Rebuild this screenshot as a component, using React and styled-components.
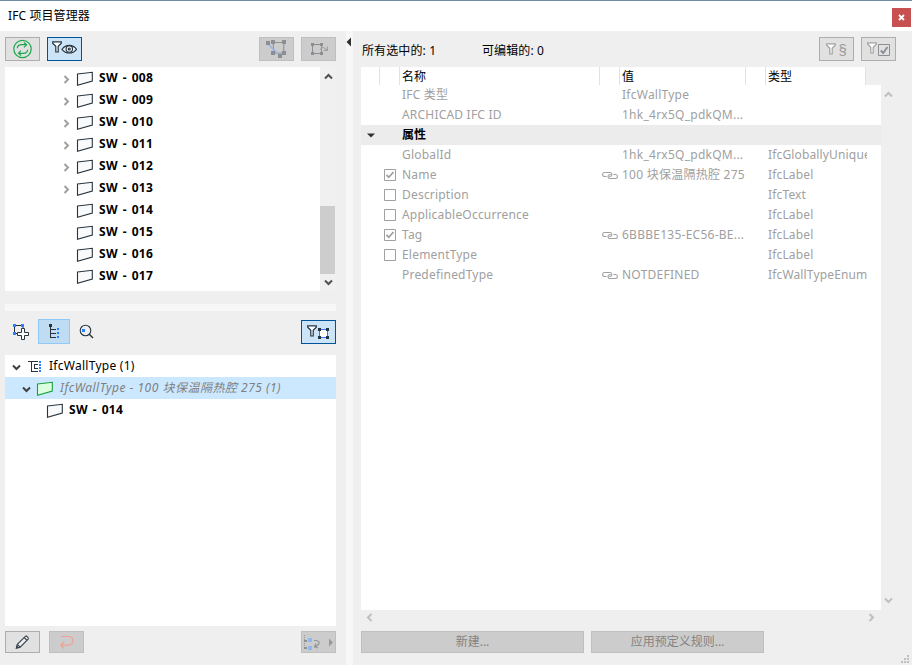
import React from "react";
import styled, { createGlobalStyle } from "styled-components";

const GlobalStyle = createGlobalStyle`
  * {
    box-sizing: border-box;
  }
  body {
    margin: 0;
    background: #efefef;
    color: #000;
    font-family: "Noto Sans", "Noto Sans CJK SC", sans-serif;
    font-size: 12px;
    line-height: 20px;
    overflow: hidden;
  }
  svg {
    display: block;
    flex: none;
  }
`;

const Window = styled.div`
  display: flex;
  flex-direction: column;
  width: 912px;
  height: 665px;
  background: #efefef;
`;

const TitleBar = styled.header`
  display: flex;
  justify-content: space-between;
  height: 31px;
  padding: 7px 1px 0 8px;
  border-top: 1px solid #6f8ca9;
  background: #fff;
`;

const Title = styled.div`
  line-height: 16px;
  letter-spacing: 0.1px;
`;

const CloseButton = styled.button`
  display: flex;
  align-items: center;
  justify-content: center;
  width: 19px;
  height: 19px;
  padding: 0;
  border: 0;
  background: #c75050;
`;

const Main = styled.main`
  display: grid;
  grid-template-columns: 336px 10px 7px 8px 551px;
  height: 634px;
`;

const LeftPane = styled.section`
  display: flex;
  flex-direction: column;
  padding-left: 5px;
`;

const SplitterGutter = styled.div`
  grid-column: 3;
  padding: 6px 0 0 0;
  background: #f7f7f7;
`;

const RightPane = styled.section`
  grid-column: 5;
  display: flex;
  flex-direction: column;
`;

const Toolbar = styled.div`
  display: flex;
  align-items: flex-start;
  height: 36px;
  padding-top: 6px;
  gap: 7px;
`;

const Spacer = styled.div`
  flex: 1;
`;

const skins = {
  normal: { bg: "#e1e1e1", line: "#adadad" },
  active: { bg: "#cce4f7", line: "#005499" },
  disabled: { bg: "#cccccc", line: "#bfbfbf" },
};

const Button = styled.button`
  display: flex;
  align-items: center;
  justify-content: center;
  flex: none;
  width: ${({ $width }) => $width || 35}px;
  height: ${({ $height }) => $height || 24}px;
  padding: 0;
  border: 1px solid ${({ $skin }) => skins[$skin || "normal"].line};
  background: ${({ $skin }) => skins[$skin || "normal"].bg};
  color: #838383;
  font: inherit;
`;

const ListBox = styled.div`
  display: flex;
  height: 224px;
  background: #fff;
`;

const Rows = styled.div`
  flex: 1;
`;

const TreeRow = styled.div`
  display: flex;
  align-items: center;
  height: 22px;
  padding-left: ${({ $indent }) => $indent}px;
  background: ${({ $selected }) => ($selected ? "#cce8ff" : "transparent")};
`;

const ChevronSlot = styled.span`
  width: ${({ $width }) => $width}px;
  padding-top: 2px;
`;

const Label = styled.span`
  margin-left: ${({ $gap }) => $gap || 6}px;
  font-weight: ${({ $bold }) => ($bold ? 700 : 400)};
  font-style: ${({ $italic }) => ($italic ? "italic" : "normal")};
  letter-spacing: ${({ $track }) => $track || 0}px;
  word-spacing: ${({ $bold }) => ($bold ? 1.3 : 0)}px;
  color: ${({ $muted }) => ($muted ? "#808080" : "#000")};
  white-space: pre;
`;

const ScrollBar = styled.div`
  display: flex;
  flex-direction: column;
  align-items: center;
  width: 16px;
  padding: 5px 0 4px;
  background: #f0f0f0;
`;

const Thumb = styled.div`
  width: 15px;
  height: 68px;
  margin: 0 1px 4px 0;
  background: #cdcdcd;
`;

const RowSplitter = styled.div`
  height: 7px;
  margin-top: 13px;
  background: #f7f7f7;
`;

const ViewBar = styled.div`
  display: flex;
  align-items: center;
  height: 44px;
  padding: 0 0 3px 7px;
`;

const ViewToggle = styled.button`
  display: flex;
  align-items: center;
  justify-content: center;
  width: 32px;
  height: 25px;
  margin: 0 9px 0 8px;
  padding: 0;
  border: 1px solid #90c8f6;
  background: #c0dcf3;
`;

const TreeBox = styled.div`
  height: 271px;
  background: #fff;
`;

const Footer = styled.div`
  display: flex;
  gap: ${({ $gap }) => $gap}px;
  padding-top: 5px;
`;

const Summary = styled.div`
  display: flex;
  height: 36px;
  padding: 6px 16px 0 1px;
  gap: 7px;
`;

const Count = styled.span`
  width: ${({ $width }) => $width}px;
  padding-top: 5px;
  line-height: 18px;
  margin-right: -7px;
  letter-spacing: 0.12px;
`;

const TableArea = styled.div`
  display: grid;
  grid-template-columns: 520px 15px;
  grid-template-rows: 18px 525px 16px;
`;

const columns = "19px 20px 200px 20px 126px 20px 100px";

const HeaderRow = styled.div`
  grid-column: 1 / 3;
  display: grid;
  grid-template-columns: ${columns};
  width: 505px;
  height: 18px;
  background: #fff;
`;

const HeaderCell = styled.div`
  height: 18px;
  padding-left: 2px;
  border-right: 1px solid #e2e2e2;
  line-height: 20px;
`;

const TableBody = styled.div`
  background: #fff;
`;

const PropertyRow = styled.div`
  display: grid;
  grid-template-columns: ${columns};
  height: 20px;
  background: ${({ $group }) => ($group ? "#ececec" : "transparent")};
  color: ${({ $group }) => ($group ? "#000" : "#a0a0a0")};
  font-weight: ${({ $group }) => ($group ? 700 : 400)};
`;

const Cell = styled.div`
  margin-right: -1px;
  padding-left: 2px;
  overflow: hidden;
  white-space: pre;
  line-height: 19px;
  letter-spacing: ${({ $track }) => $track || 0}px;
`;

const IconCell = styled.div`
  display: flex;
  align-items: center;
  padding-left: ${({ $left }) => $left || 0}px;
`;

const SideScroll = styled.div`
  display: flex;
  flex-direction: column;
  justify-content: space-between;
  align-items: center;
  padding: 5px 0;
`;

const BottomScroll = styled.div`
  display: flex;
  align-items: center;
  justify-content: space-between;
  padding: 0 5px 1px 4px;
`;

const Grip = styled.svg`
  position: absolute;
  right: 3px;
  bottom: 2px;
`;

const paths = {
  up: "M1 6.5 4.5 3 8 6.5",
  down: "M1 2.5 4.5 6 8 2.5",
  left: "M6.5 1 3 4.5 6.5 8",
  right: "M2.5 1 6 4.5 2.5 8",
};

const Chevron = ({ dir, color = "#a0a0a0" }) => (
  <svg width="9" height="9" viewBox="0 0 9 9" fill="none" stroke={color} strokeWidth="2">
    <path d={paths[dir]} />
  </svg>
);

const Slab = ({ green }) => (
  <svg width="17" height="17" viewBox="0 0 17 17">
    <path
      d="M1.5 4 16.3 2.3V11L1.5 15.3Z"
      fill={green ? "#dcffe0" : "#f9fafc"}
      stroke={green ? "#18a03c" : "#27343e"}
      strokeWidth="1.1"
    />
  </svg>
);

const Funnel = ({ color = "#27343e" }) => (
  <path d="M.7.8H9.3V2.2L6.2 5.2V11H3.8V5.2L.7 2.2Z" fill="#fff" stroke={color} strokeWidth="1.2" />
);

const RefreshIcon = () => (
  <svg width="19" height="20" viewBox="0.5 0 19 20" fill="none" stroke="#1da84e" strokeWidth="1.2">
    <circle cx="10" cy="10" r="8.7" />
    <path d="M4.8 9.3C5 7 7 5.7 9 5.7h4.8M11.5 3.5 14 5.8 11.6 8.3" />
    <path d="M15.2 10.7C15 13 13 14.3 11 14.3H6.2M8.5 16.5 6 14.2 8.4 11.7" />
  </svg>
);

const FilterEyeIcon = () => (
  <svg width="25" height="16" viewBox="0 0 25 16">
    <Funnel />
    <g fill="none" stroke="#27343e" strokeWidth="1.1">
      <path d="M10 8.3C14 3 20.5 3 24.6 8.3 20.5 13.3 14 13.3 10 8.3Z" fill="#e9f3fc" />
      <circle cx="17.3" cy="8" r="3.2" />
      <circle cx="17.3" cy="8" r="1" />
    </g>
  </svg>
);

const SelectElementsIcon = () => (
  <svg width="21" height="18" viewBox="0 0 21 18">
    <g fill="none" stroke="#939393" strokeWidth="1.1">
      <path d="M7 2.5H18L17.5 13H8Z" />
      <path d="M2 4 14 16" stroke="#93b5ef" strokeWidth="1.5" />
    </g>
    <g fill="#8b8f93">
      <path d="M0 1h4v4H0zM5 0h4v4H5zM16 0h4v4h-4zM5 11h4v4H5zM16 11h4v4h-4zM12 14h4v4h-4z" />
    </g>
  </svg>
);

const SelectNextIcon = () => (
  <svg width="19" height="16" viewBox="0 0 19 16">
    <path d="M3.5 3.5H12.5V12.5H3.5Z" fill="none" stroke="#8b8f93" />
    <path d="M2 2h3v3H2zM11 2h3v3h-3zM2 11h3v3H2zM11 11h3v3h-3z" fill="#8b8f93" />
    <path d="M11.5 8.5C12.5 6 15 5.5 17.5 9M18.5 5.5V9.5H14.5" fill="none" stroke="#9c9fa1" strokeWidth="1.1" />
  </svg>
);

const FilterRuleIcon = () => (
  <svg width="21" height="12" viewBox="0 0 21 12" overflow="visible">
    <Funnel color="#a0a0a0" />
    <text x="12.5" y="12" fontSize="15" fill="#999" fontFamily="Liberation Sans">
      §
    </text>
  </svg>
);

const FilterCheckIcon = () => (
  <svg width="23" height="14" viewBox="0 0 23 14">
    <Funnel color="#a0a0a0" />
    <path d="M11.5 2.5h11v11h-11z" fill="none" stroke="#8b8f93" />
    <path d="M13.8 8.5 16.2 11 20.5 5" fill="none" stroke="#8b8f93" strokeWidth="2" />
  </svg>
);

const AddSelectionIcon = () => (
  <svg width="18" height="18" viewBox="0 0 18 18">
    <path d="M2.5 2.5H11V10.5H2.5Z" fill="none" stroke="#27343e" />
    <path d="M9.5 5.5h3v4h4v3h-4v4h-3v-4h-4v-3h4Z" fill="#fff" stroke="#27343e" />
    <path d="M1 1h3v3H1zM9 1h3v3H9zM1 9h3v3H1z" fill="#2680ff" />
  </svg>
);

const TreeModeIcon = () => (
  <svg width="12" height="15" viewBox="0 0 12 15" shapeRendering="crispEdges">
    <path d="M2.5 1V13.5H8M2.5 5.5H8M2.5 9.5H8" fill="none" stroke="#27343e" />
    <path d="M1 0h3v3H1z" fill="#27343e" />
    <path d="M9 4h2v2H9zM9 8h2v2H9zM9 12h2v2H9z" fill="#2680ff" />
  </svg>
);

const FindIcon = () => (
  <svg width="15" height="15" viewBox="0 0 15 15">
    <circle cx="6.5" cy="6.5" r="5.3" fill="none" stroke="#27343e" strokeWidth="1.1" />
    <path d="M10 10 14 14" stroke="#27343e" strokeWidth="1.5" />
    <path d="M3 5h3v3H3z" fill="#2680ff" />
  </svg>
);

const FilterSelectionIcon = () => (
  <svg width="23" height="14" viewBox="0 0 23 14">
    <Funnel />
    <path d="M12.5 4.5h8v8h-8z" fill="#fff" stroke="#2680ff" />
    <path d="M11 3h3v3h-3zM19 3h3v3h-3zM11 11h3v3h-3zM19 11h3v3h-3z" fill="#27343e" />
  </svg>
);

const TypeIcon = () => (
  <svg width="14" height="14" viewBox="0 0 14 14" shapeRendering="crispEdges">
    <path d="M0 2.5H10M3.5 2V12.5H10M6.5 9.5V5.5H10M6 9.5H10" fill="none" stroke="#27343e" />
    <path d="M11 2h2v2h-2zM11 5h2v2h-2zM11 8h2v2h-2zM11 11h2v2h-2z" fill="#2680ff" />
  </svg>
);

const PencilIcon = () => (
  <svg width="15" height="16" viewBox="0 0 16 16" fill="none" stroke="#3a4550" strokeWidth="1.2">
    <path d="M1.5 14.5 2.5 10.5 11 2C12 .8 15 3.5 14 5L5.5 13.5Z" fill="#efefef" />
    <path d="M9.8 3.2 12.8 6.2M2.5 10.5 5.5 13.5" />
    <path d="M1.5 14.5 2 12.5 3.5 14Z" fill="#3a4550" />
  </svg>
);

const UndoIcon = () => (
  <svg width="15" height="14" viewBox="0 0 15 14" fill="none" stroke="#f0a090" strokeWidth="1.2">
    <path d="M2 1.5H9.5A4.3 4.3 0 0 1 9.5 10.2H1.8M5.3 6.7 1.6 10.2 5.3 13.6" />
  </svg>
);

const AssignIcon = () => (
  <svg width="31" height="18" viewBox="1 0 31 18">
    <path d="M2.5 2V16" stroke="#999" strokeDasharray="1 1" />
    <path d="M2 7h3v2H2zM2 14h3v2H2z" fill="#909090" />
    <path d="M6 5h4v4H6zM6 13h4v4H6z" fill="#94b6ee" />
    <path d="M12 7.5H14C18.5 8 18 12 13 13.5M14 10.5 12.5 13.8 16 15" fill="none" stroke="#939698" strokeWidth="1.2" />
    <path d="M27 5.5 31 9.5 27 13.5Z" fill="#999" />
  </svg>
);

const LinkIcon = () => (
  <svg width="16" height="10" viewBox="0 0 16 10" fill="none" stroke="#a0a0a0" strokeWidth="1.1">
    <path d="M4.5 6.5H2.2Q.6 6.5.6 4.5T2.2 2.5H8.3Q9.8 2.5 9.8 4.5T8.3 6.3H7" />
    <path d="M11.5 4.5H13.8Q15.4 4.5 15.4 6.5T13.8 8.5H7.8Q6 8.5 6 6.5T7.8 4.5H8.7" />
  </svg>
);

const CheckBox = ({ checked }) => (
  <svg width="12" height="12" viewBox="0 0 12 12" fill="none" stroke="#a0a0a0">
    <path d="M.5.5h11v11H.5z" />
    {checked && <path d="M2.5 6 4.8 8.3 9.5 3" strokeWidth="1.8" />}
  </svg>
);

const walls = [
  { id: "008", open: true },
  { id: "009", open: true },
  { id: "010", open: true },
  { id: "011", open: true },
  { id: "012", open: true },
  { id: "013", open: true },
  { id: "014" },
  { id: "015" },
  { id: "016" },
  { id: "017" },
];

const properties = [
  { name: "IFC 类型", value: "IfcWallType" },
  { name: "ARCHICAD IFC ID", value: "1hk_4rx5Q_pdkQM..." },
  { name: "属性", group: true },
  { name: "GlobalId", value: "1hk_4rx5Q_pdkQM...", type: "IfcGloballyUnique" },
  { name: "Name", value: "100 块保温隔热腔 275", type: "IfcLabel", checked: true, linked: true },
  { name: "Description", type: "IfcText", checked: false },
  { name: "ApplicableOccurrence", type: "IfcLabel", checked: false },
  { name: "Tag", value: "6BBBE135-EC56-BE...", type: "IfcLabel", checked: true, linked: true },
  { name: "ElementType", type: "IfcLabel", checked: false },
  { name: "PredefinedType", value: "NOTDEFINED", type: "IfcWallTypeEnum", linked: true },
];

const ElementPane = () => (
  <LeftPane>
    <Toolbar>
      <Button>
        <RefreshIcon />
      </Button>
      <Button $skin="active">
        <FilterEyeIcon />
      </Button>
      <Spacer />
      <Button $skin="disabled">
        <SelectElementsIcon />
      </Button>
      <Button $skin="disabled">
        <SelectNextIcon />
      </Button>
    </Toolbar>
    <ListBox>
      <Rows>
        {walls.map((wall) => (
          <TreeRow key={wall.id} $indent={57}>
            <ChevronSlot $width={14}>{wall.open && <Chevron dir="right" />}</ChevronSlot>
            <Slab />
            <Label $bold $track={0.35}>
              SW - {wall.id}
            </Label>
          </TreeRow>
        ))}
      </Rows>
      <ScrollBar>
        <Chevron dir="up" color="#505050" />
        <Spacer />
        <Thumb />
        <Chevron dir="down" color="#505050" />
      </ScrollBar>
    </ListBox>
    <RowSplitter />
    <ViewBar>
      <AddSelectionIcon />
      <ViewToggle>
        <TreeModeIcon />
      </ViewToggle>
      <FindIcon />
      <Spacer />
      <Button $skin="active">
        <FilterSelectionIcon />
      </Button>
    </ViewBar>
    <TreeBox>
      <TreeRow $indent={7}>
        <ChevronSlot $width={16}>
          <Chevron dir="down" color="#404040" />
        </ChevronSlot>
        <TypeIcon />
        <Label $gap={7} $track={0.27}>
          IfcWallType (1)
        </Label>
      </TreeRow>
      <TreeRow $indent={17} $selected>
        <ChevronSlot $width={14}>
          <Chevron dir="down" color="#404040" />
        </ChevronSlot>
        <Slab green />
        <Label $italic $muted $gap={7} $track={0.5}>
          IfcWallType - 100 块保温隔热腔 275 (1)
        </Label>
      </TreeRow>
      <TreeRow $indent={41}>
        <Slab />
        <Label $bold $track={0.35}>
          SW - 014
        </Label>
      </TreeRow>
    </TreeBox>
    <Footer $gap={9}>
      <Button $height={22}>
        <PencilIcon />
      </Button>
      <Button $height={22} $skin="disabled">
        <UndoIcon />
      </Button>
      <Spacer />
      <Button $height={22} $skin="disabled">
        <AssignIcon />
      </Button>
    </Footer>
  </LeftPane>
);

const PropertyPane = () => (
  <RightPane>
    <Summary>
      <Count $width={120}>所有选中的: 1</Count>
      <Count $width={100}>可编辑的: 0</Count>
      <Spacer />
      <Button>
        <FilterRuleIcon />
      </Button>
      <Button>
        <FilterCheckIcon />
      </Button>
    </Summary>
    <TableArea>
      <HeaderRow>
        {["", "", "名称", "", "值", "", "类型"].map((text, i) => (
          <HeaderCell key={i}>{text}</HeaderCell>
        ))}
      </HeaderRow>
      <TableBody>
        {properties.map((row) => (
          <PropertyRow key={row.name} $group={row.group}>
            <IconCell $left={6}>
              {row.group && (
                <svg width="8" height="5" viewBox="0 0 8 5">
                  <path d="M0 .5H8L4 4.5Z" fill="#303030" />
                </svg>
              )}
            </IconCell>
            <IconCell $left={4}>{row.checked !== undefined && <CheckBox checked={row.checked} />}</IconCell>
            <Cell $track={row.group ? 0 : 0.2}>{row.name}</Cell>
            <IconCell $left={2}>{row.linked && <LinkIcon />}</IconCell>
            <Cell $track={0.25}>{row.value}</Cell>
            <span />
            <Cell $track={0.15}>{row.type}</Cell>
          </PropertyRow>
        ))}
      </TableBody>
      <SideScroll>
        <Chevron dir="up" color="#bfbfbf" />
        <Chevron dir="down" color="#bfbfbf" />
      </SideScroll>
      <BottomScroll>
        <Chevron dir="left" color="#bfbfbf" />
        <Chevron dir="right" color="#bfbfbf" />
      </BottomScroll>
    </TableArea>
    <Footer $gap={7}>
      <Button $width={223} $height={22} $skin="disabled">
        新建...
      </Button>
      <Button $width={173} $height={22} $skin="disabled">
        应用预定义规则...
      </Button>
    </Footer>
  </RightPane>
);

const App = () => (
  <>
    <GlobalStyle />
    <Window>
      <TitleBar>
        <Title>IFC 项目管理器</Title>
        <CloseButton>
          <svg width="7" height="7" viewBox="0 0 7 7">
            <path d="M1 1 6 6M6 1 1 6" stroke="#fff" strokeWidth="1.8" />
          </svg>
        </CloseButton>
      </TitleBar>
      <Main>
        <ElementPane />
        <SplitterGutter>
          <svg width="6" height="10" viewBox="0 0 6 10">
            <path d="M5 .5V9.5L.5 5Z" fill="#303030" />
          </svg>
        </SplitterGutter>
        <PropertyPane />
      </Main>
      <Grip width="8" height="8" viewBox="0 0 8 8" fill="#bfbfbf">
        <path d="M6 0h2v2H6zM3 3h2v2H3zM6 3h2v2H6zM0 6h2v2H0zM3 6h2v2H3zM6 6h2v2H6z" />
      </Grip>
    </Window>
  </>
);

export default App;
